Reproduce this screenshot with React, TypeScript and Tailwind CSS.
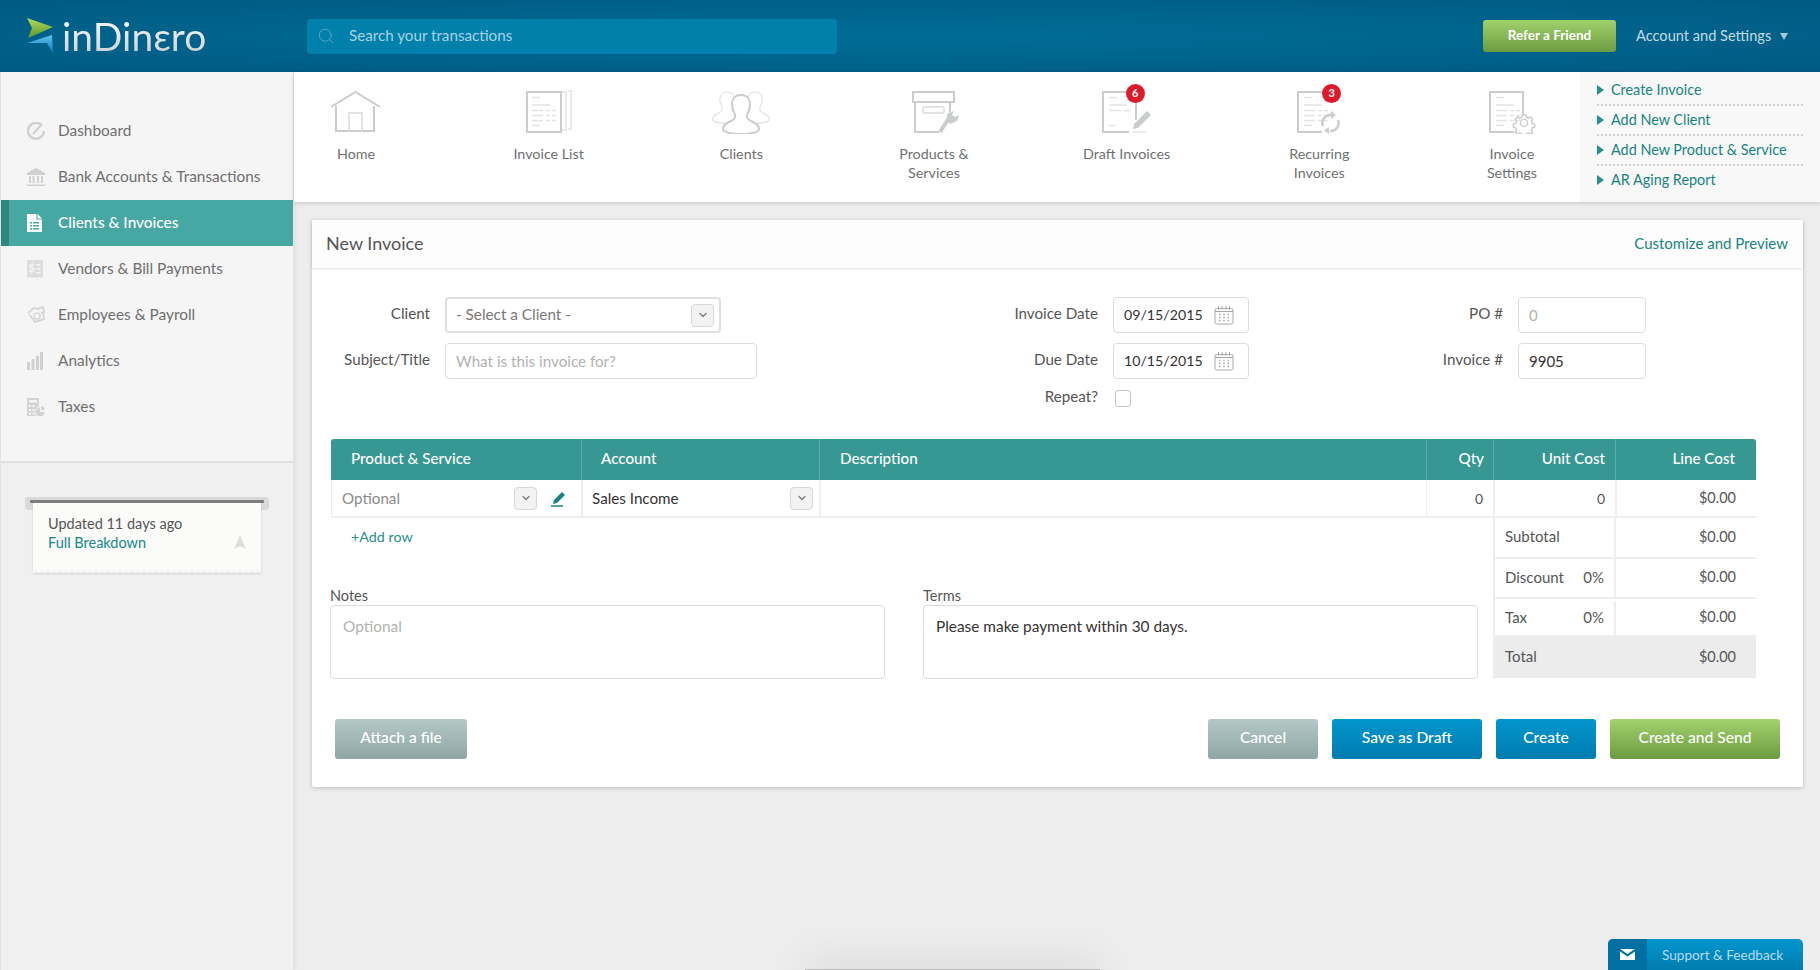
import { ChevronDown, Search } from 'lucide-react'
import type { ReactNode } from 'react'

const dark = '#c9cdcb'
const light = '#e2e4e3'

const HomeIcon = () => (
  <svg width="80" height="44" fill="none" strokeWidth="2" stroke={dark}>
    <path d="M15 17 39.500 2 64 17" />
    <path d="M20 16v25h38V16" />
    <path d="M33 41V23h13v18" stroke={light} />
  </svg>
)

const DocLines = ({ x }: { x: number }) => (
  <g stroke={light} strokeWidth="1.500">
    <path d={`M${x} 7.500h8M${x} 15h18M${x} 20.500h11m3 0h4m2 0h4M${x} 25.500h11m3 0h4m2 0h4M${x} 30.500h11m3 0h4m2 0h4M${x} 35.500h8`} />
  </g>
)

const InvoiceListIcon = () => (
  <svg width="80" height="44" fill="none" strokeWidth="2" stroke={dark}>
    <rect x="18" y="2" width="34" height="40" />
    <DocLines x={23} />
    <path d="M53 2h4v38h-4M59 1h3v38h-3" stroke={light} strokeWidth="1.500" />
  </svg>
)

const person = 'M0 0c-6 0-9 4-9 9 0 5 2 8 3 11 1 3-1 5-6 7-4 2-6 4-6 7 0 3 8 5 18 5s18-2 18-5c0-3-2-5-6-7-5-2-7-4-6-7 1-3 3-6 3-11 0-5-3-9-9-9z'

const ClientsIcon = () => (
  <svg width="80" height="44" fill="none" strokeWidth="1.500" stroke={dark}>
    <path d={person} transform="translate(26 2) scale(.8)" stroke={light} />
    <path d={person} transform="translate(54 2) scale(.8)" stroke={light} />
    <path d={person} transform="translate(40 5)" fill="#fff" strokeWidth="2" />
  </svg>
)

const ProductsIcon = () => (
  <svg width="80" height="44" fill="none" strokeWidth="2" stroke={dark}>
    <rect x="19" y="2" width="41" height="10" />
    <path d="M21 12v30h24M56 12v10" />
    <rect x="29" y="17" width="21" height="6" rx="1.500" stroke={light} />
    <path d="M46 42 55 28" strokeWidth="4" />
    <path d="m52 29 2-6 6-2-2 4 3 2 4-2-2 6-7 3z" fill={dark} stroke="none" />
  </svg>
)

const DraftIcon = () => (
  <svg width="80" height="44" fill="none" strokeWidth="2" stroke={dark}>
    <path d="M49 30V2H16v40h26" />
    <path d="M22 7.500h8M22 15h18M22 20.500h12m3 0h6M22 35.500h6" stroke={light} strokeWidth="1.500" />
    <path d="m46 39 1-5 13-13 4 4-13 13z" fill={dark} stroke="none" />
    <path d="M46 42h13" stroke={light} strokeWidth="1.500" />
  </svg>
)

const RecurringIcon = () => (
  <svg width="80" height="44" fill="none" strokeWidth="2" stroke={dark}>
    <path d="M52 8V2H19v40h24" />
    <DocLines x={25} />
    <path d="M44 36a8 8 0 0 1 8-11M59 30a8 8 0 0 1-8 11" strokeWidth="2.500" />
    <path d="m52 21 5 4-5 4zM50 37l-5 3.500 5 3.500z" fill={dark} stroke="none" />
  </svg>
)

const SettingsIcon = () => (
  <svg width="80" height="44" fill="none" strokeWidth="2" stroke={dark}>
    <path d="M51 24V2H18v40h24" />
    <DocLines x={24} />
    <g transform="translate(52 33) scale(.8)">
      <circle r="4.500" strokeWidth="1.800" />
      <path
        strokeWidth="1.800"
        d="M-2-10h4l.8 3 2.500 1 2.700-1.500 2.800 2.800-1.500 2.700 1 2.500 3 .8v4l-3 .8-1 2.500 1.500 2.700-2.800 2.800-2.700-1.500-2.500 1-.8 3h-4l-.8-3-2.500-1-2.700 1.500-2.800-2.800 1.500-2.700-1-2.500-3-.8v-4l3-.8 1-2.500-1.500-2.700 2.800-2.800 2.700 1.500 2.500-1z"
      />
    </g>
  </svg>
)

const NavItem = ({ icon, label, badge }: { icon: ReactNode; label: ReactNode; badge?: { n: number; left: string } }) => (
  <div className="relative flex w-[100px] flex-col items-center">
    <div className="h-[44px]">{icon}</div>
    <div className="mt-[10px] text-center text-[14.300px] leading-[19px] text-[#6f7070]">{label}</div>
    {badge && (
      <span className={`absolute -top-[6px] ${badge.left} flex h-[19px] w-[19px] items-center justify-center rounded-full bg-[#dc1a2b] text-[11px] font-bold text-white`}>
        {badge.n}
      </span>
    )}
  </div>
)

const sideIcons: Record<string, ReactNode> = {
  Dashboard: (
    <svg width="18" height="18" fill="none" stroke="#cfd1d0" strokeWidth="2.500">
      <path d="M15 3.500A8 8 0 1 0 17 9" />
      <path d="m6 12 9-10" strokeWidth="2" />
    </svg>
  ),
  Bank: (
    <svg width="18" height="18" fill="#cfd1d0">
      <path d="M9 0 18 5v2H0V5z" />
      <path d="M2 8h2v7H2zM5.500 8h2v7h-2zM10 8h2v7h-2zM14 8h2v7h-2zM0 16.500h18v1.500H0z" />
    </svg>
  ),
  Clients: (
    <svg width="15" height="18">
      <path d="M0 0h9.500v5.500H15V18H0z" fill="#fff" />
      <path d="M10.500 0 15 4.500h-4.500z" fill="#fff" />
      <path d="M3 8h2v1.500H3zM6 8h6v1.500H6zM3 11h2v1.500H3zM6 11h6v1.500H6zM3 14h2v1.500H3zM6 14h6v1.500H6z" fill="#47a7a2" />
    </svg>
  ),
  Vendors: (
    <svg width="16" height="18">
      <path d="M0 0h16v17l-2 1-2-1-2 1-2-1-2 1-2-1-2 1-2-1z" fill="#dcdedd" />
      <text x="1.500" y="12" fontSize="11" fontWeight="700" fill="#f5f5f5">$</text>
      <path d="M9.500 4h4v1.500h-4zM9.500 8h4v1.500h-4zM9.500 12h4v1.500h-4z" fill="#f5f5f5" />
    </svg>
  ),
  Employees: (
    <svg width="18" height="18" fill="none" stroke="#d6d8d7" strokeWidth="2">
      <path d="M1 7 7 2l4 1 5-2 1 5-3 1" />
      <path d="m2 8 6 8 9-3-1-6" />
      <circle cx="10" cy="10" r="3" strokeWidth="1.500" />
    </svg>
  ),
  Analytics: (
    <svg width="16" height="18" fill="#cfd1d0">
      <path d="M0 10h3v8H0zM4.500 7h3v11h-3zM9 3.500h3V18H9zM13 0h3v18h-3z" />
    </svg>
  ),
  Taxes: (
    <svg width="18" height="18">
      <path d="M0 0h12v8.500A6 6 0 0 0 9 18H0z" fill="#d2d4d3" />
      <path d="M2 2h8v2.500H2zM2 7h2v2H2zM5.500 7h2v2h-2zM2 11h2v2H2zM5.500 11h2v2h-2zM2 14.500h2v2H2zM5.500 14.500h2v2h-2z" fill="#f5f5f5" />
      <path d="M13 9.500a4.500 4.500 0 1 0 4.500 4.500H13z" fill="#d2d4d3" />
      <path d="M14 8a4.500 4.500 0 0 1 4 4h-4z" fill="#d2d4d3" />
    </svg>
  ),
}

const sideItems = [
  { key: 'Dashboard', label: 'Dashboard' },
  { key: 'Bank', label: 'Bank Accounts & Transactions' },
  { key: 'Clients', label: 'Clients & Invoices', active: true },
  { key: 'Vendors', label: 'Vendors & Bill Payments' },
  { key: 'Employees', label: 'Employees & Payroll' },
  { key: 'Analytics', label: 'Analytics' },
  { key: 'Taxes', label: 'Taxes' },
]

const CaretButton = ({ className = '' }: { className?: string }) => (
  <span className={`flex h-[23px] w-[23px] items-center justify-center rounded-[4px] border border-[#d8d8d8] bg-[#f3f3f3] ${className}`}>
    <ChevronDown size={12} strokeWidth={2.5} className="text-[#777]" />
  </span>
)

const CalendarIcon = () => (
  <svg width="20" height="20" fill="none" stroke="#a9a9a9" className="absolute right-[14px] top-[7px]">
    <rect x="1" y="3.500" width="18" height="15.500" rx="1.500" />
    <path d="M1 6.500h18M4.500 1v3.500M8 1v3.500M12 1v3.500M15.500 1v3.500" />
    <path d="M5 9.500h1.500M9.200 9.500h1.500M13.500 9.500H15M5 12.500h1.500M9.200 12.500h1.500M13.500 12.500H15M5 15.500h1.500M9.200 15.500h1.500M13.500 15.500H15" strokeWidth="1.500" />
  </svg>
)

const DateField = ({ value }: { value: string }) => (
  <div className="relative flex h-[36px] w-[137px] items-center rounded-[4px] border border-[#dcdcdc] pl-[10px] text-[14.200px] text-[#333]">
    {value}
    <CalendarIcon />
  </div>
)

const FieldLabel = ({ w, children }: { w: string; children: ReactNode }) => (
  <label className={`${w} shrink-0 pb-[3px] text-right text-[15.200px] text-[#555]`}>{children}</label>
)

const Btn = ({ w, tone, children }: { w: string; tone: string; children: ReactNode }) => (
  <button className={`${w} h-[40px] rounded-[3px] bg-linear-to-b ${tone} pb-[2px] text-[15.600px] font-medium text-white`}>{children}</button>
)

const gray = 'from-[#b5c8c6] to-[#8ea6a6]'
const blue = 'from-[#0296ce] to-[#007db0]'
const green = 'from-[#a2d26c] to-[#6c9c41]'

const TotalRow = ({ label, pct, h, last }: { label: string; pct?: string; h: string; last?: boolean }) => (
  <div className={`grid ${h} grid-cols-[121px_140px] text-[14.500px] text-[#555] ${last ? 'bg-[#ececec]' : 'border-b-2 border-[#eeeeee]'}`}>
    <div className={`flex items-center justify-between pb-[2px] pl-[10px] pr-[10px] text-[15px] ${last ? '' : 'border-r-2 border-[#eeeeee]'}`}>
      <span>{label}</span>
      {pct && <span>{pct}</span>}
    </div>
    <div className="flex items-center justify-end pb-[2px] pr-[20px]">$0.00</div>
  </div>
)

export default function App() {
  return (
    <div className="relative flex h-[970px] w-[1820px] flex-col overflow-hidden bg-[#ededed] [font-family:Lato,sans-serif]">
      <header className="flex h-[72px] shrink-0 items-center bg-[radial-gradient(ellipse_at_center,#006d97_0%,#005a82_100%)]">
        <div className="flex w-[307px] shrink-0 items-center pl-[27px]">
          <svg width="27" height="36" viewBox="0 0 27 36">
            <defs>
              <linearGradient id="lg" x1="0" y1="0" x2="0" y2="1">
                <stop offset="0" stopColor="#b3d95a" />
                <stop offset="1" stopColor="#5c982c" />
              </linearGradient>
              <linearGradient id="lb" x1="0" y1="0" x2="0" y2="1">
                <stop offset="0" stopColor="#5cc3ee" />
                <stop offset="1" stopColor="#0d7cc0" />
              </linearGradient>
            </defs>
            <path d="M0 0 26 9 1 20 5 10z" fill="url(#lg)" />
            <path d="M0 25 25 17 26 35 20 25z" fill="url(#lb)" />
          </svg>
          <span className="ml-[8px] bg-linear-to-b from-white to-[#c9cdd0] bg-clip-text text-[39px] leading-[44px] font-normal text-transparent">
            inDinɛro
          </span>
        </div>
        <div className="flex h-[35px] w-[530px] items-center rounded-[4px] bg-[#0080ab] pl-[10px] text-[15.200px] text-[#a8d3e3]">
          <Search size={18} strokeWidth={1.25} className="text-[#5aa9c7]" />
          <span className="mb-[2px] ml-[14px]">Search your transactions</span>
        </div>
        <button className="ml-[646px] h-[32px] w-[133px] rounded-[3px] bg-linear-to-b from-[#a2d26c] to-[#6c9c41] pb-[2px] text-[13.500px] font-bold text-white">
          Refer a Friend
        </button>
        <span className="ml-[20px] text-[14.600px] text-[#c2dbe6]">Account and Settings</span>
        <span className="ml-[9px] mt-[1px] h-0 w-0 border-x-[4px] border-t-[7px] border-x-transparent border-t-[#a6c8d8]" />
      </header>

      <div className="flex min-h-0 flex-1">
        <aside className="flex w-[294px] shrink-0 flex-col border-x border-l-[#e2e2e2] border-r-[#e6e6e6] bg-[#f0f0f0] shadow-[1px_0_3px_rgba(0,0,0,0.08)]">
          <nav className="h-[391px] border-b-2 border-[#e0e0e0] bg-[#f5f5f5] pt-[36px]">
            {sideItems.map((item) => (
              <div
                key={item.key}
                className={
                  item.active
                    ? 'flex h-[46px] items-center border-l-[8px] border-[#2e8880] bg-[#47a7a2] pl-[17px] text-[15.400px] font-medium text-white'
                    : 'flex h-[46px] items-center pl-[25px] text-[15.400px] text-[#6f6f6f]'
                }
              >
                <span className="flex w-[32px] shrink-0 items-center pl-[1px]">{sideIcons[item.key]}</span>
                <span className="mb-[1px]">{item.label}</span>
              </div>
            ))}
          </nav>
          <div className="ml-[24px] mt-[34px] w-[244px]">
            <div className="flex h-[13px] items-start justify-center rounded-[4px] bg-[#d9d9d9] pt-[3px]">
              <div className="h-[3px] w-[234px] rounded-[1px] bg-[#7d7d7d]" />
            </div>
            <div className="relative mx-[8px] -mt-[7px] h-[70px] bg-[#fbfbf9] pl-[15px] pt-[11px] text-[14.500px] leading-[19px] shadow-[0_1px_2px_rgba(0,0,0,0.12)]">
              <div className="text-[#555]">Updated 11 days ago</div>
              <div className="text-[#14878a]">Full Breakdown</div>
              <svg width="12" height="14" className="absolute right-[15px] top-[32px]">
                <path d="M6 0 12 14 6 11 0 14z" fill="#dcdedd" />
              </svg>
              <svg width="228" height="4" className="absolute bottom-0 left-0">
                <defs>
                  <pattern id="zig" width="6" height="4" patternUnits="userSpaceOnUse">
                    <path d="M0 4 3 1l3 3z" fill="#f0f0f0" />
                  </pattern>
                </defs>
                <rect width="228" height="4" fill="url(#zig)" />
              </svg>
            </div>
          </div>
        </aside>

        <main className="min-w-0 flex-1">
          <div className="flex h-[130px] bg-white shadow-[0_1px_4px_rgba(0,0,0,0.18)]">
            <div className="flex flex-1 justify-between pl-[12px] pr-[18px] pt-[18px]">
              <NavItem icon={<HomeIcon />} label="Home" />
              <NavItem icon={<InvoiceListIcon />} label="Invoice List" />
              <NavItem icon={<ClientsIcon />} label="Clients" />
              <NavItem
                icon={<ProductsIcon />}
                label={
                  <>
                    Products &<br />
                    Services
                  </>
                }
              />
              <NavItem icon={<DraftIcon />} label="Draft Invoices" badge={{ n: 6, left: 'left-[49px]' }} />
              <NavItem
                icon={<RecurringIcon />}
                label={
                  <>
                    Recurring
                    <br />
                    Invoices
                  </>
                }
                badge={{ n: 3, left: 'left-[53px]' }}
              />
              <NavItem
                icon={<SettingsIcon />}
                label={
                  <>
                    Invoice
                    <br />
                    Settings
                  </>
                }
              />
            </div>
            <div className="w-[240px] shrink-0 bg-[#f8f8f8] px-[17px] pt-[4px] text-[14.400px] text-[#17847f]">
              {['Create Invoice', 'Add New Client', 'Add New Product & Service', 'AR Aging Report'].map((t, i) => (
                <div key={t} className={`flex h-[30px] items-center border-b-2 border-dotted ${i < 3 ? 'border-[#d0d0d0]' : 'border-transparent'}`}>
                  <span className="mr-[7px] h-0 w-0 border-y-[5px] border-l-[7px] border-y-transparent border-l-[#2a8f8c]" />
                  {t}
                </div>
              ))}
            </div>
          </div>

          <section className="ml-[18px] mt-[18px] h-[567px] w-[1491px] rounded-[2px] bg-white shadow-[0_1px_4px_rgba(0,0,0,0.2)]">
            <div className="flex h-[48px] items-center justify-between bg-[#fdfdfd] pb-[2px] pl-[14px] pr-[15px] shadow-[0_1px_2px_rgba(0,0,0,0.12)]">
              <h1 className="text-[18px] text-[#555]">New Invoice</h1>
              <a className="text-[15px] text-[#17847f]">Customize and Preview</a>
            </div>

            <div className="flex pt-[29px]">
              <div className="flex w-[445px] flex-col gap-[10px]">
                <div className="flex h-[36px] items-center gap-[15px]">
                  <FieldLabel w="w-[118px]">Client</FieldLabel>
                  <div className="flex h-[36px] w-[276px] items-center justify-between rounded-[4px] border-2 border-[#dfdfdf] pl-[9px] pr-[5px] text-[15.300px] text-[#777]">
                    <span className="mb-[2px]">- Select a Client -</span>
                    <CaretButton />
                  </div>
                </div>
                <div className="flex h-[36px] items-center gap-[15px]">
                  <FieldLabel w="w-[118px]">Subject/Title</FieldLabel>
                  <div className="flex h-[36px] w-[312px] items-center rounded-[4px] border border-[#dcdcdc] pl-[10px] text-[15.200px] text-[#b2b2b2]">
                    What is this invoice for?
                  </div>
                </div>
              </div>

              <div className="ml-[220px] flex w-[272px] flex-col gap-[10px]">
                <div className="flex items-center gap-[15px]">
                  <FieldLabel w="w-[121px]">Invoice Date</FieldLabel>
                  <DateField value="09/15/2015" />
                </div>
                <div className="flex items-center gap-[15px]">
                  <FieldLabel w="w-[121px]">Due Date</FieldLabel>
                  <DateField value="10/15/2015" />
                </div>
                <div className="flex h-[17px] items-center gap-[17px] pt-[1px]">
                  <FieldLabel w="w-[121px]">Repeat?</FieldLabel>
                  <span className="h-[17px] w-[16px] rounded-[3px] border border-[#c4c4c4]" />
                </div>
              </div>

              <div className="ml-[153px] flex flex-col gap-[10px]">
                <div className="flex items-center gap-[15px]">
                  <FieldLabel w="w-[101px]">PO #</FieldLabel>
                  <div className="flex h-[36px] w-[128px] items-center rounded-[4px] border border-[#dcdcdc] pl-[10px] text-[15px] text-[#b2b2b2]">0</div>
                </div>
                <div className="flex items-center gap-[15px]">
                  <FieldLabel w="w-[101px]">Invoice #</FieldLabel>
                  <div className="flex h-[36px] w-[128px] items-center rounded-[4px] border border-[#dcdcdc] pl-[10px] text-[15px] text-[#333]">9905</div>
                </div>
              </div>
            </div>

            <div className="ml-[19px] mt-[33px] w-[1425px]">
              <div className="grid h-[41px] grid-cols-[250px_238px_607px_67px_122px_141px] rounded-t-[3px] bg-[#379893] pb-[2px] text-[15.200px] font-medium text-white">
                <div className="flex items-center pl-[20px]">Product &amp; Service</div>
                <div className="-mb-[2px] flex items-center border-l border-[#5cada9] pb-[2px] pl-[19px]">Account</div>
                <div className="-mb-[2px] flex items-center border-l border-[#5cada9] pb-[2px] pl-[20px]">Description</div>
                <div className="-mb-[2px] flex items-center justify-end border-l border-[#5cada9] pb-[2px] pr-[9px]">Qty</div>
                <div className="-mb-[2px] flex items-center justify-end border-l border-[#5cada9] pb-[2px] pr-[10px]">Unit Cost</div>
                <div className="-mb-[2px] flex items-center justify-end border-l border-[#5cada9] pb-[2px] pr-[21px]">Line Cost</div>
              </div>
              <div className="grid h-[38px] grid-cols-[250px_238px_607px_67px_122px_141px] border-b-2 border-[#eeeeee] text-[15.200px]">
                <div className="flex items-center border-l border-[#eeeeee] pl-[10px] pr-[14px] text-[#8a8a8a]">
                  <span className="flex-1">Optional</span>
                  <CaretButton />
                  <svg width="16" height="17" className="ml-[14px]">
                    <path d="m3 10 8-8 3 3-8 8-4 1z" fill="#17847f" />
                    <path d="M0 16h12" stroke="#17847f" strokeWidth="1.500" />
                  </svg>
                </div>
                <div className="flex items-center border-l-2 border-[#eeeeee] pl-[9px] pr-[6px] text-[#333]">
                  <span className="flex-1">Sales Income</span>
                  <CaretButton />
                </div>
                <div className="border-l-2 border-[#eeeeee]" />
                <div className="flex items-center justify-end border-l border-[#eeeeee] pr-[10px] text-[14px] text-[#555]">0</div>
                <div className="flex items-center justify-end border-l-2 border-[#eeeeee] pr-[10px] text-[14px] text-[#555]">0</div>
                <div className="flex items-center justify-end border-l-2 border-[#eeeeee] pr-[20px] text-[14.500px] text-[#555]">$0.00</div>
              </div>

              <div className="flex">
                <div className="-ml-[1px] w-[1163px]">
                  <div className="pl-[21px] pt-[10px] text-[14.300px] leading-[18px] text-[#2a8f8c]">+Add row</div>
                  <div className="mt-[41px] flex gap-[38px] text-[15.400px]">
                    <div className="w-[555px]">
                      <div className="text-[14.500px] leading-[18px] text-[#555]">Notes</div>
                      <div className="h-[74px] rounded-[4px] border border-[#dcdcdc] pl-[12px] pt-[9px] text-[#b2b2b2]">Optional</div>
                    </div>
                    <div className="w-[555px]">
                      <div className="text-[14.500px] leading-[18px] text-[#555]">Terms</div>
                      <div className="h-[74px] rounded-[4px] border border-[#dcdcdc] pl-[12px] pt-[9px] text-[#333]">Please make payment within 30 days.</div>
                    </div>
                  </div>
                </div>
                <div className="w-[263px] border-l-2 border-[#eeeeee]">
                  <TotalRow label="Subtotal" h="h-[41px]" />
                  <TotalRow label="Discount" pct="0%" h="h-[40px]" />
                  <TotalRow label="Tax" pct="0%" h="h-[38px] pt-[2px]" />
                  <TotalRow label="Total" h="h-[41px]" last />
                </div>
              </div>
            </div>

            <div className="mx-[23px] mt-[40px] flex justify-between">
              <Btn w="w-[132px]" tone={gray}>Attach a file</Btn>
              <div className="flex gap-[14px]">
                <Btn w="w-[110px]" tone={gray}>Cancel</Btn>
                <Btn w="w-[150px]" tone={blue}>Save as Draft</Btn>
                <Btn w="w-[100px]" tone={blue}>Create</Btn>
                <Btn w="w-[170px]" tone={green}>Create and Send</Btn>
              </div>
            </div>
          </section>
        </main>
      </div>

      <div className="absolute left-[805px] top-[969px] h-[10px] w-[295px] bg-[#bbbbbb] shadow-[0_0_40px_rgba(0,0,0,0.22)]" />

      <div className="absolute bottom-0 right-[17px] flex h-[31px] w-[195px] items-center overflow-hidden rounded-t-[5px] bg-linear-to-b from-[#0296ce] to-[#007db0] text-[13.600px] text-[#b5dcee]">
        <span className="flex h-full w-[39px] items-center justify-center bg-[#006fa2]">
          <svg width="15" height="11" fill="#fff">
            <path d="M0 0h15L7.500 5z" />
            <path d="M0 2.500 7.500 7.500 15 2.500V11H0z" />
          </svg>
        </span>
        <span className="ml-[15px] mt-[1px]">Support &amp; Feedback</span>
      </div>
    </div>
  )
}
